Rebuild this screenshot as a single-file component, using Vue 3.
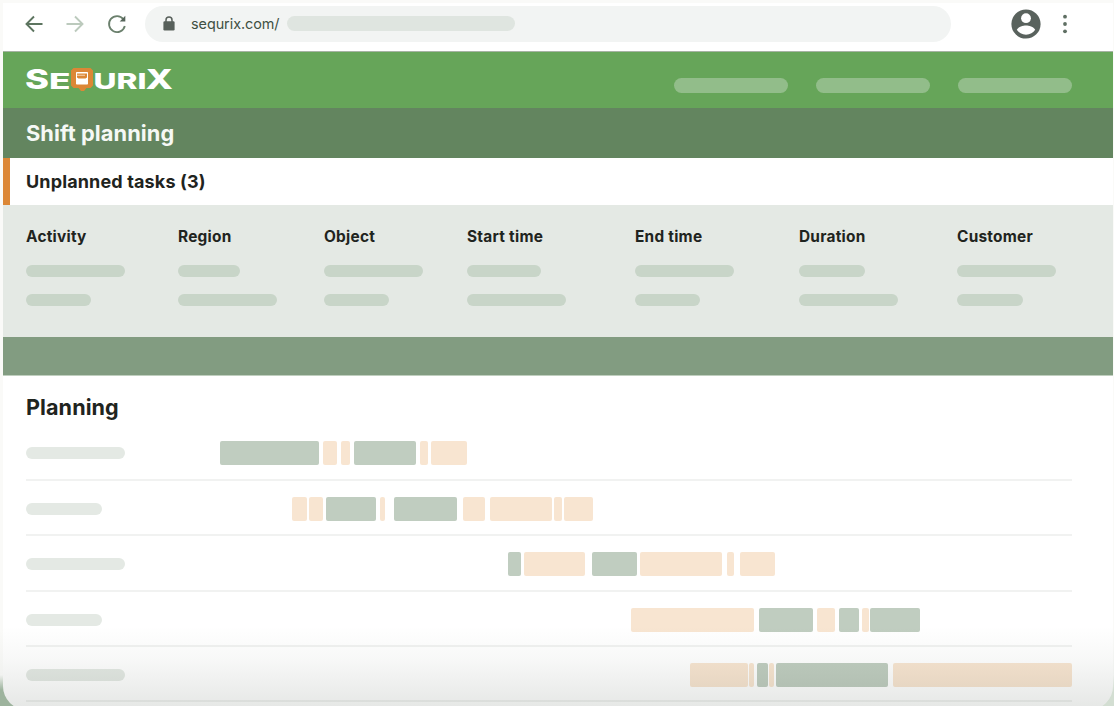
<template>
  <div class="stage">
    <div class="window">
      <!-- Browser bar -->
      <div class="browser-bar">
        <svg class="nav-icon" viewBox="0 0 20 20" fill="none" stroke="#5d7560" stroke-width="1.9">
          <path d="M18.5 10H2.5M10 2.5L2.5 10l7.5 7.5"></path>
        </svg>
        <svg class="nav-icon forward" viewBox="0 0 20 20" fill="none" stroke="#bccabd" stroke-width="1.9">
          <path d="M1.5 10h16M10 2.5l7.5 7.5-7.5 7.5"></path>
        </svg>
        <svg class="nav-icon reload" viewBox="0 0 20 20">
          <path d="M16.4 5.2A8 8 0 1 0 17.8 12" fill="none" stroke="#6b806d" stroke-width="1.8"></path>
          <path d="M18.3 1.8v5.6h-5.6z" fill="#56655a"></path>
        </svg>
        <div class="address">
          <svg class="lock" viewBox="0 0 12 15">
            <path d="M3 6V4a3 3 0 0 1 6 0v2" fill="none" stroke="#58605b" stroke-width="1.5"></path>
            <rect x="0.4" y="5.2" width="11.2" height="9.3" rx="1.2" fill="#58605b"></rect>
          </svg>
          <span class="url">sequrix.com/</span>
          <span class="url-rest"></span>
        </div>
        <svg class="avatar" viewBox="0 0 30 30">
          <circle cx="15" cy="15" r="14.6" fill="#59625d"></circle>
          <circle cx="15" cy="9.2" r="4.9" fill="#fff"></circle>
          <path d="M5.8 20.8C7.5 17.6 12 16.5 15 16.5s7.5 1.1 9.2 4.3C22.3 23.8 19 25.7 15 25.7s-7.3-1.9-9.2-4.9z" fill="#fff"></path>
        </svg>
        <svg class="dots" viewBox="0 0 6 20" fill="#5f6f63">
          <circle cx="3" cy="2.7" r="1.9"></circle>
          <circle cx="3" cy="10" r="1.9"></circle>
          <circle cx="3" cy="17.3" r="1.9"></circle>
        </svg>
      </div>

      <!-- App header -->
      <header class="app-header">
        <svg class="logo" viewBox="0 0 156 44">
          <g class="logo-text">
            <text x="2" y="30.3" font-size="27" textLength="24" lengthAdjust="spacingAndGlyphs">S</text>
            <text x="26" y="30.3" font-size="22" textLength="21.5" lengthAdjust="spacingAndGlyphs">E</text>
            <text x="70.5" y="30.3" font-size="22" textLength="53" lengthAdjust="spacingAndGlyphs">URI</text>
            <text x="122.5" y="30.3" font-size="27.5" textLength="27.5" lengthAdjust="spacingAndGlyphs">X</text>
          </g>
          <path d="M50.5 9h17l2.500 2.500v15L67.500 29h-4l-2.500 3h-3l-2.500-3h-5L48 26.500v-15z" fill="#dc8736"></path>
          <rect x="53" y="13" width="12" height="12.5" rx="0.8" fill="#fff"></rect>
          <path d="M54 14.500h10v4l-1.500 1h-7l-1.500-1z" fill="#dc8736"></path>
          <path d="M54 15.700h8v1h-8z" fill="#f5d5b5"></path>
        </svg>
        <nav class="menu">
          <span v-for="n in 3" :key="n" class="menu-item"></span>
        </nav>
      </header>

      <div class="page-title">Shift planning</div>
      <div class="section-title">Unplanned tasks (3)</div>

      <!-- Unplanned tasks -->
      <div class="tasks">
        <div v-for="col in columns" :key="col.label" class="task-col">
          <div class="task-label">{{ col.label }}</div>
          <div v-for="(w, i) in col.widths" :key="i" class="pill" :style="{ width: w + 'px' }"></div>
        </div>
      </div>

      <div class="divider-bar"></div>

      <!-- Planning timeline -->
      <section class="planning">
        <h2>Planning</h2>
        <div v-for="(row, r) in rows" :key="r" class="lane">
          <div class="lane-name">
            <span class="pill light" :style="{ width: row.name + 'px' }"></span>
          </div>
          <div class="lane-track">
            <span
              v-for="(b, i) in row.blocks"
              :key="i"
              class="block"
              :class="b[0]"
              :style="{ marginLeft: b[1] + 'px', width: b[2] + 'px' }"
            ></span>
          </div>
        </div>
      </section>
      <div class="fade"></div>
    </div>
  </div>
</template>

<script setup>
const columns = [
  { label: 'Activity', widths: [99, 65] },
  { label: 'Region', widths: [62, 99] },
  { label: 'Object', widths: [99, 65] },
  { label: 'Start time', widths: [74, 99] },
  { label: 'End time', widths: [99, 65] },
  { label: 'Duration', widths: [66, 99] },
  { label: 'Customer', widths: [99, 66] }
];

// each block: [kind, gap before, width]
const rows = [
  {
    name: 99,
    blocks: [
      ['shift', 0, 99], ['gap', 4, 14], ['gap', 4, 9], ['shift', 4, 62],
      ['gap', 4, 8], ['gap', 3, 36]
    ]
  },
  {
    name: 76,
    blocks: [
      ['gap', 72, 15], ['gap', 2, 14], ['shift', 3, 50], ['gap', 4, 5], ['shift', 9, 63],
      ['gap', 6, 22], ['gap', 5, 62], ['gap', 2, 8], ['gap', 2, 29]
    ]
  },
  {
    name: 99,
    blocks: [
      ['shift', 288, 13], ['gap', 3, 61], ['shift', 7, 45], ['gap', 3, 82],
      ['gap', 5, 7], ['gap', 6, 35]
    ]
  },
  {
    name: 76,
    blocks: [
      ['gap', 411, 123], ['shift', 5, 54], ['gap', 4, 18], ['shift', 4, 20],
      ['gap', 3, 7], ['shift', 1, 50]
    ]
  },
  {
    name: 99,
    blocks: [
      ['gap', 470, 58], ['gap', 1, 5], ['shift', 3, 11], ['gap', 1, 5],
      ['shift', 2, 112], ['gap', 5, 179]
    ]
  }
];
</script>

<style>
body {
  background: #fafaf8;
}
</style>

<style scoped>
.stage {
  width: 1114px;
  height: 706px;
  overflow: hidden;
  box-sizing: border-box;
  padding: 3px 1px 0 3px;
  background:
    linear-gradient(to bottom, #fafaf8 630px, #f1f2f0 675px, #9db39d 690px) left / 557px 100% no-repeat,
    linear-gradient(to bottom, #fafaf8 630px, #eef0ee 675px, #d3ded2 690px);
  font-family: Inter, sans-serif;
  color: #1f2420;
}
.window {
  position: relative;
  height: 707px;
  overflow: hidden;
  background: #fff;
  border-radius: 0 0 24px 24px;
}
.browser-bar {
  display: flex;
  align-items: center;
  height: 49px;
  box-sizing: border-box;
  padding: 0 43px 7px 21px;
  border-bottom: 1px solid #a6b3a3;
}
.nav-icon {
  width: 20px;
  height: 20px;
}
.forward {
  margin-left: 21px;
}
.reload {
  margin-left: 22px;
}
.address {
  display: flex;
  align-items: center;
  width: 806px;
  height: 36px;
  margin-left: 18px;
  box-sizing: border-box;
  padding-left: 18px;
  border-radius: 18px;
  background: #f2f4f3;
}
.lock {
  width: 12px;
  height: 15px;
}
.url {
  width: 96px;
  margin-left: 16px;
  font-size: 14.4px;
  letter-spacing: -0.05px;
  color: #405043;
}
.url-rest {
  width: 228px;
  height: 15px;
  border-radius: 8px;
  background: #dfe5e0;
}
.avatar {
  width: 30px;
  height: 30px;
  margin-left: 60px;
}
.dots {
  width: 6px;
  height: 20px;
  margin-left: 21px;
}
.app-header {
  display: flex;
  justify-content: space-between;
  height: 56px;
  background: #66a559;
}
.logo {
  width: 156px;
  height: 44px;
  margin: 7px 0 0 20px;
}
.logo-text {
  font-family: Inter, sans-serif;
  font-weight: 800;
  fill: #fff;
}
.menu {
  display: flex;
  gap: 28px;
  padding: 26px 41px 0 0;
}
.menu-item {
  width: 114px;
  height: 15px;
  border-radius: 8px;
  background: #92bd8a;
}
.page-title {
  height: 50px;
  line-height: 51px;
  padding-left: 23px;
  background: #63855f;
  color: #f5f8f5;
  font-size: 21.8px;
  letter-spacing: 0.06px;
  font-weight: 700;
}
.section-title {
  height: 47px;
  box-sizing: border-box;
  line-height: 48px;
  padding-left: 16px;
  border-left: 7px solid #dc8736;
  font-size: 18px;
  letter-spacing: 0.14px;
  font-weight: 700;
}
.tasks {
  display: grid;
  grid-template-columns: 152px 146px 143px 168px 164px 158px 1fr;
  height: 132px;
  box-sizing: border-box;
  padding: 22px 0 0 23px;
  background: #e4e9e4;
}
.task-label {
  height: 20px;
  line-height: 20px;
  margin-bottom: 17.6px;
  font-size: 15.4px;
  letter-spacing: 0.25px;
  font-weight: 700;
}
.pill {
  display: block;
  height: 12px;
  margin-bottom: 17px;
  border-radius: 6px;
  background: #c8d5c8;
}
.pill.light {
  margin: 0;
  background: #e4e9e4;
}
.divider-bar {
  height: 38px;
  background: #829c81;
  border-bottom: 1px solid #c0cfbf;
}
.planning {
  padding: 0 41px 0 23px;
}
h2 {
  height: 49.5px;
  margin: 0;
  line-height: 62px;
  font-size: 21.6px;
  letter-spacing: 0.08px;
  font-weight: 700;
}
.lane {
  display: flex;
  align-items: center;
  height: 55.4px;
  box-sizing: border-box;
  padding-top: 2.6px;
  border-bottom: 2px solid #f1f2f1;
}
.lane-name {
  width: 194px;
  flex: none;
}
.lane-track {
  display: flex;
}
.block {
  flex: none;
  height: 24px;
  border-radius: 2px;
}
.block.shift {
  background: #c0cdc0;
}
.block.gap {
  background: #f8e5d1;
}
/* shade over the lower edge of the window */
.fade {
  position: absolute;
  left: 0;
  right: 0;
  bottom: 4px;
  height: 80px;
  background: linear-gradient(to bottom, rgba(30, 45, 30, 0), rgba(30, 45, 30, 0.03) 40%, rgba(30, 45, 30, 0.11));
}
</style>
